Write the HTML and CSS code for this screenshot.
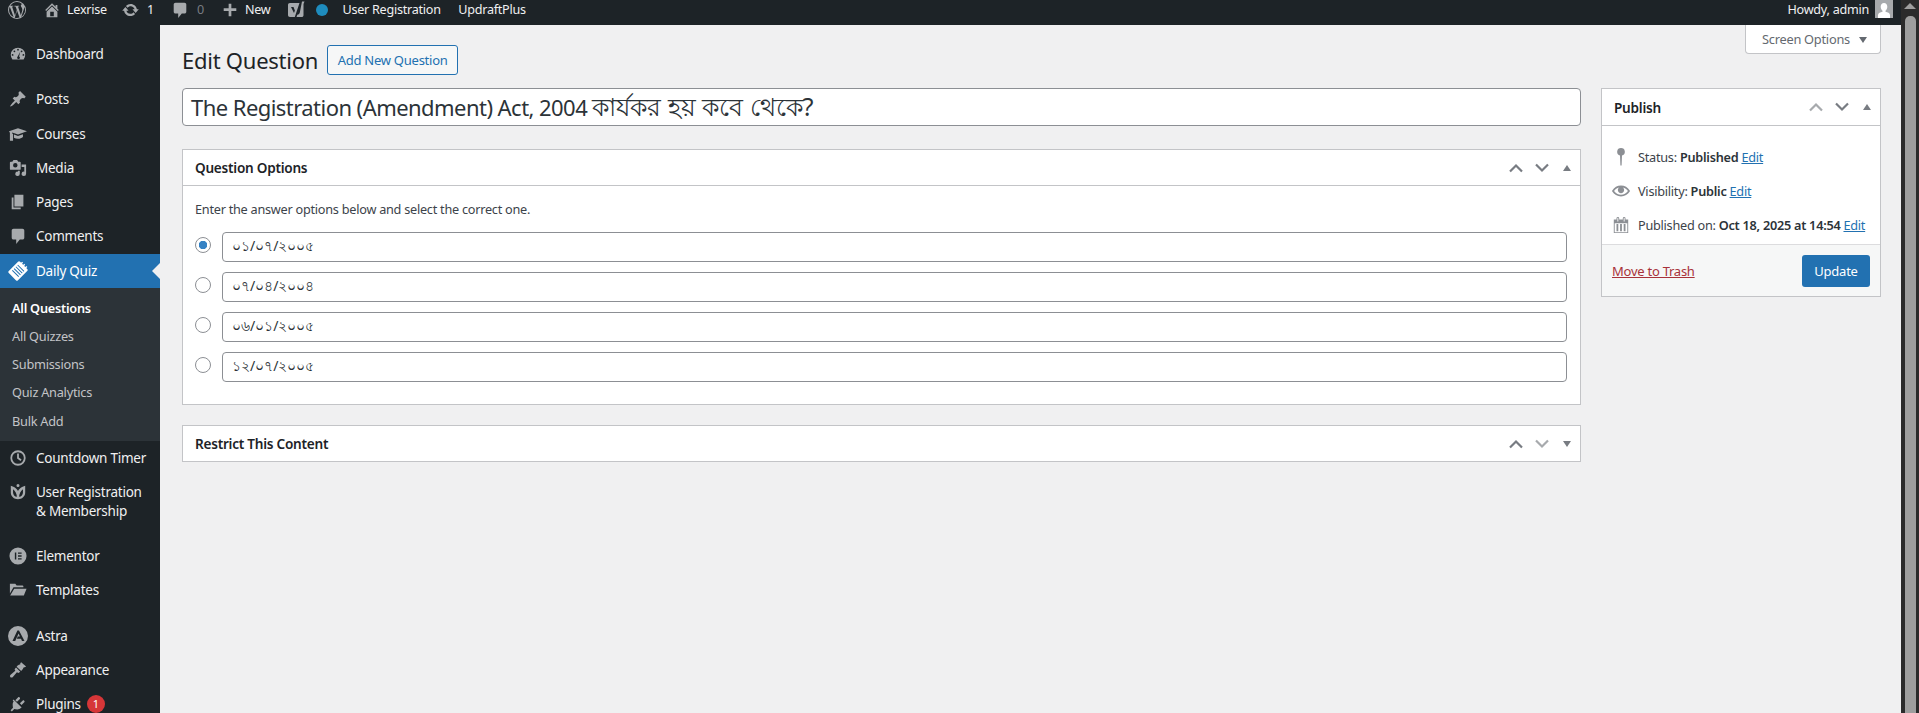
FILE: index.html
```html
<!DOCTYPE html>
<html lang="en">
<head>
    <meta charset="UTF-8">
    <title>Edit Question</title>
    <link rel="stylesheet" href="styles.css">
</head>
<body>
    <svg class="defs" width="0" height="0">
        <symbol id="chev-up" viewBox="0 0 16 10"><path d="M2 8.500L8 2.500L14 8.500" fill="none" stroke="currentColor" stroke-width="2.200"/></symbol>
        <symbol id="chev-down" viewBox="0 0 16 10"><path d="M2 1.500L8 7.500L14 1.500" fill="none" stroke="currentColor" stroke-width="2.200"/></symbol>
    </svg>
    <div class="shell">
        <div class="page">
            <!-- top bar -->
            <div class="adminbar">
                <svg class="bar-icon bar-wp" viewBox="0 0 20 20"><path fill-rule="evenodd" d="M10 0a10 10 0 1 0 0 20a10 10 0 0 0 0-20zm0 1.200a8.800 8.800 0 0 1 5.900 2.300c-1-.1-1.700.7-1.700 1.600c0 .8.500 1.400 1 2.200c.4.600.7 1.400.7 2.500c0 .8-.3 1.700-.7 2.900l-.9 3l-3.200-9.500c.5 0 1-.1 1-.1c.5-.1.4-.8 0-.7c0 0-1.400.1-2.300.1c-.8 0-2.300-.1-2.300-.1c-.5 0-.5.700-.1.700c0 0 .5.100 1 .100l1.400 3.900l-2 6l-3.300-9.900c.5 0 1-.1 1-.1c.5-.1.4-.8 0-.7c0 0-1.400.1-2.400.1h-.5A8.800 8.800 0 0 1 10 1.200zM1.200 10c0-1.300.3-2.500.8-3.600l4.200 11.500A8.800 8.800 0 0 1 1.200 10zm8.900.800l2.700 7.400l.1.100a8.800 8.800 0 0 1-5.400.2zm7.800-4.800a8.800 8.800 0 0 1-3.200 11.700l2.700-7.800c.5-1.300.7-2.300.7-3.200c0-.3 0-.5-.2-.7z"/></svg>
                <svg class="bar-icon bar-home" viewBox="0 0 20 20"><path d="M16 8.500l1.530 1.530l-1.060 1.060L10 4.620l-6.470 6.470l-1.060-1.060L10 2.500l4 4v-2h2v4zm-6-2.460l6 5.990V18H4v-5.970zM12 17v-5H8v5h4z"/></svg>
                <span class="bar-text bar-site">Lexrise</span>
                <svg class="bar-icon bar-update" viewBox="0 0 20 20"><path d="M10.200 3.280c3.530 0 6.430 2.610 6.920 6h2.080l-3.500 4l-3.500-4h2.320c-.45-1.970-2.210-3.450-4.320-3.450c-1.450 0-2.730.71-3.540 1.780L4.950 5.660C6.230 4.200 8.110 3.280 10.200 3.280zm-.4 13.440c-3.520 0-6.430-2.610-6.920-6H.8l3.500-4c1.170 1.330 2.330 2.670 3.500 4H5.480c.45 1.970 2.210 3.450 4.320 3.450c1.450 0 2.730-.71 3.540-1.780l1.710 1.950c-1.280 1.460-3.150 2.380-5.250 2.380z"/></svg>
                <span class="bar-text bar-count">1</span>
                <svg class="bar-icon bar-comment" viewBox="0 0 20 20"><path d="M5 2h10c1.100 0 2 .9 2 2v8c0 1.100-.9 2-2 2h-3l-4 5v-5H5c-1.100 0-2-.9-2-2V4c0-1.100.9-2 2-2z"/></svg>
                <span class="bar-text bar-zero">0</span>
                <svg class="bar-icon bar-plus" viewBox="0 0 20 20"><path d="M17 8v3h-5.500v6h-3v-6H3V8h5.500V3h3v5z"/></svg>
                <span class="bar-text bar-new">New</span>
                <svg class="bar-icon bar-yoast" viewBox="0 0 18 18"><path d="M3 2h9.500L7.800 16H3c-1.300 0-2-.8-2-2V4c0-1.200.7-2 2-2zm12-1.500h2.500l-1 2.500v11c0 1.400-.7 2-2 2H9.500l.8-2.300c1.500-.2 2-.9 2.500-2.300zM4 6l3 6l.9-2.400L6.500 6z"/></svg>
                <span class="bar-dot"></span>
                <span class="bar-text bar-ur">User Registration</span>
                <span class="bar-text bar-updraft">UpdraftPlus</span>
                <span class="bar-text bar-howdy">Howdy, admin</span>
                <span class="bar-avatar"><svg viewBox="0 0 18 18"><path d="M9 3c2 0 3.300 1.500 3.300 3.700c0 1.700-.8 3.200-1.800 4v1.100c2 .6 4.500 1.300 4.500 3.200V18H3v-3c0-1.900 2.500-2.600 4.500-3.200v-1.100c-1-.8-1.800-2.300-1.800-4C5.700 4.500 7 3 9 3z"/></svg></span>
            </div>

            <div class="body-row">
                <!-- left menu -->
                <nav class="sidemenu">
                    <a class="menu-item menu-dash"><svg viewBox="0 0 20 20"><path fill-rule="evenodd" d="M3.760 16h12.480A8 8 0 1 0 3.760 16zM10 4.200a1 1 0 1 1 0 2a1 1 0 0 1 0-2zM6 6a1 1 0 1 1 0 2a1 1 0 0 1 0-2zm8 0a1 1 0 1 1 0 2a1 1 0 0 1 0-2zM4 10a1 1 0 1 1 0 2a1 1 0 0 1 0-2zm12 0a1 1 0 1 1 0 2a1 1 0 0 1 0-2zm-3.500-2.500l-1.300 5.200a1.500 1.500 0 1 1-2 .8z"/></svg>Dashboard</a>

                    <a class="menu-item menu-first"><svg viewBox="0 0 20 20"><path d="M10.440 3.020l1.820-1.820l6.360 6.350l-1.830 1.820c-1.050-.68-2.480-.57-3.410.36l-.75.75c-.92.93-1.040 2.350-.35 3.400l-1.830 1.820l-2.410-2.410l-2.800 2.790c-.42.42-3.380 2.710-3.800 2.290s1.860-3.390 2.280-3.810l2.790-2.790L4.100 9.360l1.830-1.820c1.050.69 2.480.57 3.400-.36l.75-.75c.93-.92 1.050-2.350.36-3.410z"/></svg>Posts</a>
                    <a class="menu-item"><svg viewBox="0 0 20 20"><path d="M10 3.500L20 7l-10 3.500L3.500 8.200v1.300l1 .5v7.500H1V8.600L0 7zM5.500 10.600l4.500 1.700l5.500-2v3c-1.500 1.300-3.300 2-5.500 2c-1.700 0-3.200-.4-4.500-1.200z"/></svg>Courses</a>
                    <a class="menu-item"><svg viewBox="0 0 20 20"><path d="M13 11V4c0-.55-.45-1-1-1h-1.670L9 1H5L3.670 3H2c-.55 0-1 .45-1 1v7c0 .55.45 1 1 1h10c.55 0 1-.45 1-1zM7 4.500a2.500 2.500 0 1 1 0 5a2.500 2.500 0 0 1 0-5zM14 6h5v10.500a2.500 2.500 0 1 1-2-2.450V9h-3V6zm-4 8.050V13h2v3.500a2.500 2.500 0 1 1-2-2.450z"/></svg>Media</a>
                    <a class="menu-item"><svg viewBox="0 0 20 20"><path d="M6 15V2h10v13H6zm-1 1h8v2H3V5h2v11z"/></svg>Pages</a>
                    <a class="menu-item"><svg viewBox="0 0 20 20"><path d="M5 2h10c1.100 0 2 .9 2 2v8c0 1.100-.9 2-2 2h-3l-4 5v-5H5c-1.100 0-2-.9-2-2V4c0-1.100.9-2 2-2z"/></svg>Comments</a>
                    <a class="menu-item menu-active"><svg class="icon-large" viewBox="0 0 20 20"><g transform="rotate(45 10 10)"><rect x="3.500" y="2" width="13" height="16" rx="1.500" fill="#fff"/><path d="M5.500 6h9M5.500 8.500h9M5.500 11h9M5.500 13.500h9" stroke="#2271b1" stroke-width="1"/><path d="M7 .5v3M10 .5v3M13 .5v3" stroke="#fff" stroke-width="1.400"/></g></svg>Daily Quiz</a>
                    <div class="submenu">
                        <a class="sub-current">All Questions</a>
                        <a>All Quizzes</a>
                        <a>Submissions</a>
                        <a>Quiz Analytics</a>
                        <a>Bulk Add</a>
                    </div>
                    <a class="menu-item"><svg viewBox="0 0 20 20"><path fill-rule="evenodd" d="M10 1.500a8.500 8.500 0 1 1 0 17a8.500 8.500 0 0 1 0-17zm0 2a6.500 6.500 0 1 0 0 13a6.500 6.500 0 0 0 0-13zM9 5h2v4.500l3 2.300l-1.200 1.500L9 10.500z"/></svg>Countdown Timer</a>
                    <a class="menu-item menu-two"><svg viewBox="0 0 20 20"><path fill-rule="evenodd" d="M10 1a1.700 1.700 0 1 1 0 3.400a1.700 1.700 0 0 1 0-3.400zM2 3l3.500 1.500c1.900 1 3.500 2.400 4.500 4.500c1-2.100 2.600-3.500 4.500-4.500L18 3v7.500c0 4.300-3.600 7.500-8 7.500s-8-3.200-8-7.500zm2.500 4v3.500c0 2.500 1.800 4.500 4.300 4.900c-.2-3.500-1.800-6.600-4.300-8.400zm11 0c-2.500 1.800-4.100 4.900-4.300 8.400c2.500-.4 4.300-2.400 4.300-4.900z"/></svg><span>User Registration<br>&amp; Membership</span></a>
                    <a class="menu-item menu-first"><svg viewBox="0 0 20 20"><path fill-rule="evenodd" d="M10 .5a9.500 9.500 0 1 1 0 19a9.500 9.500 0 0 1 0-19zM6.500 6v8h1.600V6zm3.500 0v1.600h4V6zm0 3.200v1.600h4V9.200zm0 3.200V14h4v-1.600z"/></svg>Elementor</a>
                    <a class="menu-item"><svg viewBox="0 0 20 20"><path d="M1 3h6l1.500 2H15c.6 0 1 .4 1 1v1H5L1 14zM5.800 8.500H19.500L16.500 16H1.300z"/></svg>Templates</a>
                    <a class="menu-item menu-first"><svg class="icon-large" viewBox="0 0 20 20"><path fill-rule="evenodd" d="M10 0a10 10 0 1 1 0 20a10 10 0 0 1 0-20zm-.6 4.500L4.500 15h2.700l3.400-7.500l1.300 3H9.800l-1 2.200h4.200l1 2.300h2.500L11 4.500z"/></svg>Astra</a>
                    <a class="menu-item"><svg viewBox="0 0 20 20"><path d="M13.500 1.500L19 6l-1.500 1c-.8-.3-1.300 0-1.500.6c-.3 1.200-1 2.400-2.500 3.400L8.500 6.300c1-1.400 2.200-2.100 3.400-2.400c.6-.2.900-.7.600-1.500zM7.800 7.300l4.700 4.700l-2 1.400l-1.700-.8l-4.500 5.200c-.7.800-2 .9-2.700.2s-.6-2 .2-2.700l5.200-4.500l-.8-1.700z"/></svg>Appearance</a>
                    <a class="menu-item"><svg viewBox="0 0 20 20"><path d="M13.110 4.360L9.870 7.600L8 5.730l3.240-3.240c.35-.34 1.050-.2 1.560.32c.52.51.66 1.210.31 1.550zm-8 1.770l.91-1.120l9.010 9.010l-1.190.84c-.71.71-2.110 1.160-3.600 1.160c-1.270 0-2.590-.26-3.390-.36l-2.670 2.670l-1.420-1.420l2.670-2.670c-.1-.8-.36-2.120-.36-3.390c0-1.490.45-2.890 1.160-3.600zm9.870 4.980l-1.870-1.870l3.240-3.240c.34-.35 1.040-.21 1.550.31c.52.51.66 1.210.32 1.560z" transform="translate(-1 0)"/></svg>Plugins<span class="badge">1</span></a>
                </nav>

                <!-- content -->
                <main class="main">
                    <div class="screen-tab">Screen Options<i class="tri-down"></i></div>
                    <div class="heading-row">
                        <h1>Edit Question</h1>
                        <a class="btn-outline">Add New Question</a>
                    </div>
                    <div class="columns">
                        <div class="col-left">
                            <div class="title-input">The Registration (Amendment) Act, 2004 <span class="title-bn">কার্যকর হয় কবে থেকে?</span></div>
                            <section class="postbox first-box">
                                <div class="postbox-header">
                                    <h2>Question Options</h2>
                                    <div class="handles">
                                        <svg class="chev"><use href="#chev-up"/></svg>
                                        <svg class="chev"><use href="#chev-down"/></svg>
                                        <i class="tri-up"></i>
                                    </div>
                                </div>
                                <div class="options-body">
                                    <p>Enter the answer options below and select the correct one.</p>
                                    <div class="option"><span class="radio radio-on"></span><input type="text" value="০১/০৭/২০০৫"></div>
                                    <div class="option"><span class="radio"></span><input type="text" value="০৭/০৪/২০০৪"></div>
                                    <div class="option"><span class="radio"></span><input type="text" value="০৬/০১/২০০৫"></div>
                                    <div class="option"><span class="radio"></span><input type="text" value="১২/০৭/২০০৫"></div>
                                </div>
                            </section>
                            <section class="postbox">
                                <div class="postbox-header">
                                    <h2>Restrict This Content</h2>
                                    <div class="handles">
                                        <svg class="chev"><use href="#chev-up"/></svg>
                                        <svg class="chev chev-off"><use href="#chev-down"/></svg>
                                        <i class="tri-closed"></i>
                                    </div>
                                </div>
                            </section>
                        </div>
                        <aside class="col-right">
                            <section class="postbox">
                                <div class="postbox-header publish-header">
                                    <h2>Publish</h2>
                                    <div class="handles">
                                        <svg class="chev chev-off"><use href="#chev-up"/></svg>
                                        <svg class="chev"><use href="#chev-down"/></svg>
                                        <i class="tri-up"></i>
                                    </div>
                                </div>
                                <div class="misc">
                                    <div class="misc-row"><svg viewBox="0 0 18 18"><path d="M9 0a3.800 3.800 0 0 1 1 7.470L9.600 17.500H8.400L8 7.470A3.800 3.800 0 0 1 9 0z"/></svg><span>Status: <b>Published</b> <a>Edit</a></span></div>
                                    <div class="misc-row"><svg viewBox="0 0 20 20"><path d="M19.700 9.400C17.700 6 14.100 3.900 10 3.900S2.300 6 .3 9.400L0 10l.3.600c2 3.400 5.600 5.500 9.700 5.500s7.700-2.100 9.700-5.500l.3-.6l-.3-.6zM10 14.100c-3.100 0-6-1.600-7.700-4.100C3.600 8 5.700 6.600 8 6.100c-.9.600-1.500 1.700-1.500 2.900c0 1.900 1.600 3.500 3.500 3.500s3.500-1.600 3.500-3.500c0-1.200-.6-2.300-1.500-2.900c2.300.5 4.400 1.900 5.700 3.900c-1.700 2.500-4.600 4.100-7.700 4.100z"/></svg><span>Visibility: <b>Public</b> <a>Edit</a></span></div>
                                    <div class="misc-row"><svg viewBox="0 0 20 20"><path fill-rule="evenodd" d="M15 4h3v15H2V4h3V2.500a1.500 1.500 0 0 1 3 0V4h4V2.500a1.500 1.500 0 0 1 3 0zM6 6h1V2.500a.5.5 0 0 0-1 0zm7 0h1V2.500a.5.5 0 0 0-1 0zm4 12V8H3v10zM5 9h2v8H5zm4 0h2v8H9zm4 0h2v8h-2z"/></svg><span>Published on: <b>Oct 18, 2025 at 14:54</b> <a>Edit</a></span></div>
                                </div>
                                <div class="publish-actions">
                                    <a class="trash">Move to Trash</a>
                                    <a class="btn-primary">Update</a>
                                </div>
                            </section>
                        </aside>
                    </div>
                </main>
            </div>
        </div>
        <div class="scrollbar"><i class="scroll-arrow"></i><div class="scroll-thumb"></div></div>
    </div>
</body>
</html>
```

FILE: styles.css
```css
html, body {
    margin: 0;
    height: 713px;
    overflow: hidden;
}
body {
    font-family: "Noto Sans", sans-serif;
    font-size: 13.5px;
    letter-spacing: -0.25px;
    color: #3c434a;
    background-color: #f0f0f1;
}
.defs {
    display: block;
}
.shell {
    display: flex;
    height: 713px;
}
.page {
    flex: 1;
    min-width: 0;
    display: flex;
    flex-direction: column;
}

/* top bar */
.adminbar {
    height: 25px;
    flex: none;
    display: flex;
    padding-top: 1px;
    box-sizing: border-box;
    background-color: #1d2327;
    color: #f0f0f1;
    font-size: 12.6px;
}
.bar-icon {
    fill: #a7aaad;
    flex: none;
    height: 18px;
}
.bar-text {
    line-height: 18px;
    white-space: nowrap;
}
.bar-wp { width: 20px; margin-left: 7px; }
.bar-home { width: 18px; margin-left: 16px; }
.bar-site { margin-left: 6px; }
.bar-update { width: 19px; margin-left: 14px; }
.bar-count { margin-left: 7px; }
.bar-comment { width: 18px; margin-left: 17px; }
.bar-zero { margin-left: 8px; color: #787c82; }
.bar-plus { width: 18px; margin-left: 17px; }
.bar-new { margin-left: 6px; }
.bar-yoast { width: 18px; margin-left: 17px; }
.bar-dot {
    width: 12px;
    height: 12px;
    margin: 3px 0 0 11px;
    border-radius: 50%;
    background-color: #1e8cbe;
}
.bar-ur { margin-left: 14px; }
.bar-updraft { margin-left: 17.500px; }
.bar-howdy { margin-left: auto; }
.bar-avatar {
    width: 18px;
    height: 18px;
    margin: -1px 8px 0 6px;
    background-color: #a7aaad;
}
.bar-avatar svg {
    display: block;
    fill: #fff;
}

.body-row {
    flex: 1;
    min-height: 0;
    display: flex;
}

/* left menu */
.sidemenu {
    width: 160px;
    flex: none;
    padding-top: 12px;
    background-color: #1d2327;
}
.menu-item {
    position: relative;
    display: flex;
    align-items: center;
    height: 34.250px;
    padding-left: 36px;
    color: #f0f0f1;
    white-space: nowrap;
}
.menu-item svg {
    position: absolute;
    left: 9px;
    top: 8px;
    width: 18px;
    height: 18px;
    fill: #a7aaad;
}
.menu-item svg.icon-large {
    left: 8px;
    top: 7px;
    width: 20px;
    height: 20px;
}
.menu-first {
    margin-top: 11px;
}
.menu-two {
    height: 53px;
    line-height: 19px;
    align-items: flex-start;
    padding-top: 8px;
    box-sizing: border-box;
}
.menu-active {
    background-color: #2271b1;
    color: #fff;
}
.menu-active::after {
    content: "";
    position: absolute;
    right: 0;
    top: 9px;
    border: 8px solid transparent;
    border-right-color: #f0f0f1;
    border-left-width: 0;
}
.submenu {
    height: 153px;
    padding-top: 6px;
    box-sizing: border-box;
    background-color: #2c3338;
}
.submenu a {
    display: block;
    height: 28.200px;
    line-height: 28px;
    padding-left: 12px;
    font-size: 12.750px;
    color: #c3c4c7;
}
.submenu .sub-current {
    color: #fff;
    font-weight: 600;
}
.badge {
    width: 18px;
    height: 18px;
    margin-left: 6px;
    border-radius: 50%;
    background-color: #d63638;
    color: #fff;
    font-size: 11px;
    line-height: 18px;
    text-align: center;
}

/* content */
.main {
    flex: 1;
    min-width: 0;
    padding: 0 20px 0 22px;
}
.screen-tab {
    float: right;
    width: 136px;
    height: 29px;
    box-sizing: border-box;
    padding-left: 16px;
    border: 1px solid #c3c4c7;
    border-top: none;
    border-radius: 0 0 4px 4px;
    background-color: #fff;
    color: #646970;
    line-height: 28px;
    font-size: 12.800px;
}
.tri-down {
    display: inline-block;
    margin-left: 9px;
    vertical-align: 1px;
    border: 4px solid transparent;
    border-top: 6px solid #646970;
    border-bottom-width: 0;
}
.heading-row {
    display: flex;
    align-items: center;
    gap: 9px;
    height: 30px;
    padding-top: 20px;
}
h1 {
    margin: 0;
    font-size: 22px;
    font-weight: 400;
    color: #1d2327;
}
.btn-outline {
    width: 131px;
    height: 30px;
    box-sizing: border-box;
    border: 1px solid #2271b1;
    border-radius: 3px;
    background-color: #f6f7f7;
    color: #2271b1;
    font-size: 13px;
    line-height: 28px;
    text-align: center;
}
.columns {
    display: grid;
    grid-template-columns: 1fr 280px;
    gap: 20px;
    margin-top: 13px;
}
.title-input {
    height: 38px;
    box-sizing: border-box;
    padding-left: 8px;
    border: 1px solid #8c8f94;
    border-radius: 4px;
    font-size: 22px;
    line-height: 35px;
    letter-spacing: -0.55px;
    color: #2c3338;
    background-color: #fff;
    white-space: nowrap;
}
.title-bn {
    font-size: 24.800px;
    letter-spacing: 0;
}
.postbox {
    margin-top: 20px;
    border: 1px solid #c3c4c7;
    background-color: #fff;
}
.first-box {
    margin-top: 23px;
}
.col-right .postbox {
    margin-top: 0;
}
.postbox-header {
    display: flex;
    align-items: center;
    justify-content: space-between;
    height: 35px;
    padding-left: 12px;
}
.publish-header {
    height: 36px;
}
.first-box .postbox-header,
.publish-header {
    border-bottom: 1px solid #c3c4c7;
}
.postbox-header h2 {
    margin: 0;
    font-size: 13.600px;
    font-weight: 600;
    color: #1d2327;
}
.handles {
    display: flex;
    align-items: center;
    color: #787c82;
    padding-right: 9px;
}
.chev {
    width: 16px;
    height: 10px;
    margin-right: 10px;
}
.chev-off {
    color: #a7aaad;
}
.tri-up, .tri-closed {
    width: 0;
    margin-left: 3px;
    border: 4px solid transparent;
}
.tri-up {
    border-bottom: 6px solid #787c82;
    border-top-width: 0;
}
.tri-closed {
    border-top: 6px solid #787c82;
    border-bottom-width: 0;
}
.options-body {
    padding: 13px 13px 22px 12px;
}
.options-body p {
    margin: 0 0 13px;
    line-height: 20px;
    font-size: 12.700px;
}
.option {
    display: flex;
    gap: 11px;
    margin-top: 10px;
}
.option input {
    flex: 1;
    height: 30px;
    box-sizing: border-box;
    padding: 0 9px;
    border: 1px solid #8c8f94;
    border-radius: 4px;
    font-family: inherit;
    font-size: 14px;
    color: #2c3338;
    background-color: #fff;
}
.radio {
    width: 16px;
    height: 16px;
    box-sizing: border-box;
    margin-top: 5px;
    border: 1px solid #8c8f94;
    border-radius: 50%;
    background-color: #fff;
}
.radio-on {
    border-color: #8c8f94;
    background: radial-gradient(circle, #3582c4 0 4px, #fff 4.500px);
}
.option:first-of-type {
    margin-top: 0;
}

/* publish box */
.misc {
    padding: 14px 10px 2px;
    font-size: 12.700px;
}
.misc-row {
    display: flex;
    align-items: center;
    gap: 8px;
    height: 34px;
    white-space: nowrap;
}
.misc-row svg {
    width: 18px;
    height: 18px;
    flex: none;
    fill: #8c8f94;
}
.misc-row b {
    font-weight: 600;
    color: #2c3338;
}
.misc-row a {
    color: #2271b1;
    text-decoration: underline;
}
.publish-actions {
    display: flex;
    align-items: center;
    justify-content: space-between;
    height: 51px;
    padding: 0 10px;
    border-top: 1px solid #dcdcde;
    background-color: #f6f7f7;
    font-size: 13px;
}
.trash {
    color: #a8323a;
    text-decoration: underline;
}
.btn-primary {
    width: 68px;
    height: 32px;
    border-radius: 3px;
    background-color: #2271b1;
    color: #fff;
    line-height: 32px;
    text-align: center;
}

/* scrollbar */
.scrollbar {
    width: 18px;
    flex: none;
    padding-top: 3px;
    box-sizing: border-box;
    background-color: #2b2b2b;
}
.scroll-arrow {
    display: block;
    width: 0;
    margin: 0 auto;
    border: 6px solid transparent;
    border-bottom: 6px solid #9e9e9e;
    border-top-width: 0;
}
.scroll-thumb {
    width: 11px;
    height: 720px;
    margin: 7px 0 0 4px;
    border-radius: 5px 5px 0 0;
    background-color: #9e9e9e;
}
```
